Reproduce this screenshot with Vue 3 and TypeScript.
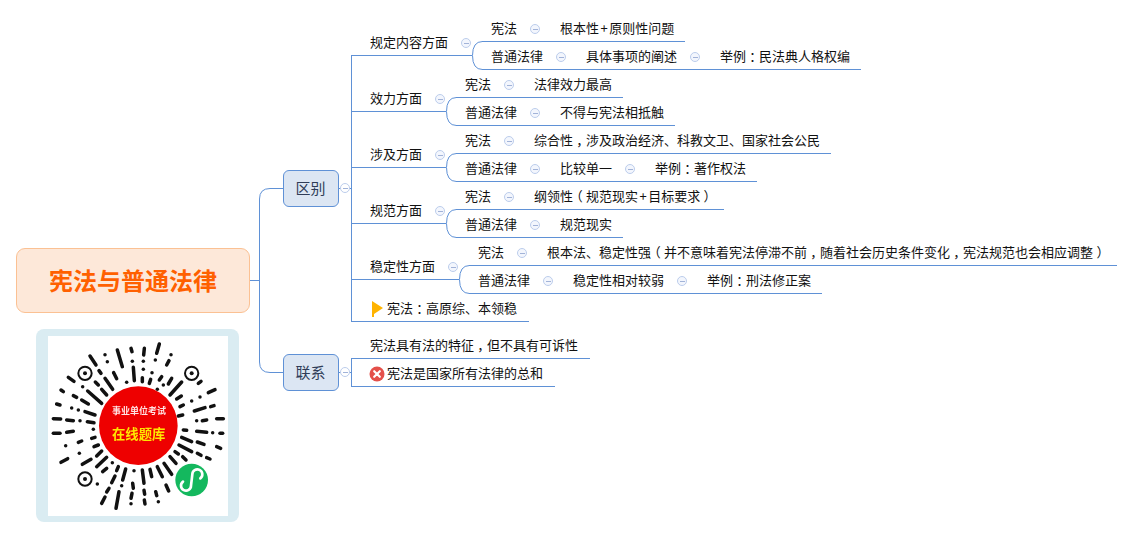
<script setup lang="ts">
type Aspect = { label: string; line: number; fork: number; rows: string[][] }

const aspects: Aspect[] = [
  { label: '规定内容方面', line: 55, fork: 472, rows: [['宪法', '根本性+原则性问题'], ['普通法律', '具体事项的阐述', '举例：民法典人格权编']] },
  { label: '效力方面', line: 111, fork: 446, rows: [['宪法', '法律效力最高'], ['普通法律', '不得与宪法相抵触']] },
  { label: '涉及方面', line: 167, fork: 446, rows: [['宪法', '综合性，涉及政治经济、科教文卫、国家社会公民'], ['普通法律', '比较单一', '举例：著作权法']] },
  { label: '规范方面', line: 223, fork: 446, rows: [['宪法', '纲领性（规范现实+目标要求）'], ['普通法律', '规范现实']] },
  { label: '稳定性方面', line: 279, fork: 459, rows: [['宪法', '根本法、稳定性强（并不意味着宪法停滞不前，随着社会历史条件变化，宪法规范也会相应调整）'], ['普通法律', '稳定性相对较弱', '举例：刑法修正案']] }
]

// The reference font centres full-width punctuation in its cell, so those glyphs get their own box.
const segs = (t: string) => t.split(/([，：（）+])/).filter(Boolean)
const punct = (s: string) => (s === '+' ? 'pc plus' : /[，：（）]/.test(s) ? 'pc half' : '')

const forkPath = (a: Aspect) => {
  const f = a.fork + 0.5
  const y = a.line + 0.5
  return `M${f + 10} ${y - 14} Q${f} ${y - 14} ${f} ${y} Q${f} ${y + 14} ${f + 10} ${y + 14}`
}

const rays: number[][] = [
  [478,72,470,100],[433,85,431,105],[393,85,396,95],[352,90,367,140],[315,104,315,104],[513,104,513,104],
  [270,108,288,135],[322,125,322,125],[397,124,397,124],[430,124,430,124],[466,120,466,120],[507,122,500,135],
  [297,152,303,160],[341,158,350,176],[400,142,403,182],[430,148,430,148],[456,158,456,158],[485,170,478,180],
  [515,175,505,192],[315,175,338,208],[286,186,295,195],[380,187,380,187],[427,173,427,185],[452,178,448,190],
  [490,195,490,195],[545,186,510,225],[603,184,595,190],[205,172,222,184],[248,200,248,200],[305,208,320,225],
  [263,213,305,250],[472,208,472,208],[645,209,625,218],[183,210,190,215],[220,227,230,232],[245,240,265,252],
  [530,237,544,228],[600,231,600,231],[575,243,575,243],[170,252,180,255],[215,264,215,264],[235,270,235,270],
  [255,275,285,285],[540,260,550,255],[583,273,615,263],[632,260,642,257],[160,296,182,297],[200,300,220,302],
  [240,302,240,302],[262,305,282,308],[535,288,548,285],[590,302,590,302],[607,302,620,300],[650,296,670,296],
  [160,340,180,340],[200,337,220,334],[280,328,280,328],[550,330,560,331],[590,334,620,337],[638,338,638,338],
  [660,340,668,340],[235,367,245,363],[275,355,285,352],[545,352,575,365],[592,366,612,373],[650,380,662,385],
  [197,377,197,377],[282,380,295,375],[537,375,575,395],[238,400,238,400],[290,408,305,393],[525,395,535,402],
  [592,400,603,406],[620,413,630,417],[183,427,203,416],[247,433,273,418],[290,440,320,412],[510,410,528,430],
  [548,410,558,420],[337,428,337,428],[308,455,320,445],[355,440,350,452],[377,447,368,480],[402,452,402,452],
  [427,450,432,490],[450,448,455,470],[472,440,487,470],[492,430,515,463],[345,468,335,488],[292,492,292,492],
  [327,505,320,516],[365,497,365,497],[398,490,400,505],[432,511,434,523],[467,515,470,527],[498,495,506,513],
  [315,531,305,550],[357,515,348,565],[396,520,393,535],[393,551,393,551],[433,540,435,552],[475,545,475,545]
]
const finders: number[][] = [[255,160],[575,160],[255,477]]
const notes = { flag: '宪法：高原综、本领稳', plain: '宪法具有法的特征，但不具有可诉性', cross: '宪法是国家所有法律的总和' }
</script>

<template>
  <div class="map">
    <svg class="links" width="1134" height="538" viewBox="0 0 1134 538">
      <path d="M250 280.5H259.5M283 188.5H270Q259.5 188.5 259.5 199V362Q259.5 372.5 270 372.5H283" />
      <path d="M339 188.5H351.5M351.5 55V322" />
      <path d="M339 372.5H351.5M351.5 358V387" />
      <path v-for="a in aspects" :key="a.label" :d="forkPath(a)" />
    </svg>

    <div class="root">宪法与普通法律</div>

    <div class="qr">
      <svg class="qr-art" width="203" height="193" viewBox="108 27 609 579">
        <rect x="144" y="48" width="540" height="540" fill="#fff" />
        <g stroke="#111" stroke-width="10.5" stroke-linecap="round" fill="none">
          <path v-for="(r, i) in rays" :key="i" :d="`M${r[0]} ${r[1]}L${r[2]} ${r[3]}`" />
        </g>
        <g v-for="(f, i) in finders" :key="'f' + i">
          <circle :cx="f[0]" :cy="f[1]" r="20" fill="none" stroke="#111" stroke-width="6" />
          <circle :cx="f[0]" :cy="f[1]" r="6" fill="#111" />
        </g>
        <circle cx="415" cy="317" r="118" fill="#ee0000" />
        <text x="417" y="283" class="qr-top">事业单位考试</text>
        <text x="416" y="356" class="qr-main">在线题库</text>
        <circle cx="575" cy="480" r="49" fill="#14b85e" />
        <path d="M549 485A15 15 0 1 0 573 497L577 463A15 15 0 1 1 601 475" fill="none" stroke="#fff" stroke-width="8" stroke-linecap="round" />
      </svg>
    </div>

    <div class="topic" style="left:283px;top:170px">区别</div>
    <span class="toggle abs" style="left:340px;top:183px"></span>
    <div class="topic" style="left:283px;top:354px">联系</div>
    <span class="toggle abs" style="left:340px;top:367px"></span>

    <template v-for="a in aspects" :key="a.label">
      <div class="row aspect" :style="{ top: a.line - 24 + 'px', width: a.fork - 352 + 'px' }">
        <span>{{ a.label }}</span><i class="toggle"></i>
      </div>
      <div
        v-for="(r, i) in a.rows"
        :key="i"
        class="row leaf"
        :style="{ left: a.fork + 10 + 'px', top: a.line + (i ? 14 : -14) - 24 + 'px' }"
      >
        <template v-for="(p, j) in r" :key="j">
          <i v-if="j" class="toggle"></i><span><span v-for="(s, k) in segs(p)" :key="k" :class="punct(s)">{{ s }}</span></span>
        </template>
      </div>
    </template>

    <div class="row note" style="top:297px">
      <svg class="flag" width="11" height="16" viewBox="0 0 11 16"><path d="M0 0L11 7L2 13V16H0Z" fill="#ffb300" /></svg>
      <span><span v-for="(s, k) in segs(notes.flag)" :key="k" :class="punct(s)">{{ s }}</span></span>
    </div>
    <div class="row note plain" style="top:334px">
      <span><span v-for="(s, k) in segs(notes.plain)" :key="k" :class="punct(s)">{{ s }}</span></span>
    </div>
    <div class="row note" style="top:362px">
      <svg class="cross" width="16" height="16" viewBox="0 0 16 16">
        <circle cx="8" cy="8" r="7.5" fill="#e4504a" />
        <path d="M5.2 5.2L10.8 10.8M10.8 5.2L5.2 10.8" stroke="#fff" stroke-width="2.2" stroke-linecap="round" />
      </svg>
      <span>{{ notes.cross }}</span>
    </div>
  </div>
</template>

<style>
html, body { margin: 0; background: #fff; }
</style>

<style scoped>
.map {
  position: relative;
  width: 1134px;
  height: 538px;
  overflow: hidden;
  background: #fff;
  font-family: "Noto Sans CJK SC", "Noto Sans", sans-serif;
  font-size: 13px;
  color: #111;
}
.links { position: absolute; left: 0; top: 0; }
.links path { fill: none; stroke: #5f91d6; stroke-width: 1; }
.root {
  position: absolute;
  left: 16px;
  top: 248px;
  width: 234px;
  height: 65px;
  box-sizing: border-box;
  padding-bottom: 2px;
  display: flex;
  align-items: center;
  justify-content: center;
  background: #fde8d9;
  border: 1px solid #fbc193;
  border-radius: 9px;
  color: #ff6000;
  font-size: 24px;
  font-weight: 700;
}
.qr {
  position: absolute;
  left: 36px;
  top: 329px;
  width: 203px;
  height: 193px;
  background: #daecf2;
  border-radius: 8px;
}
.qr-art { display: block; filter: blur(0.35px); }
.qr-top { font-size: 27px; font-weight: 700; fill: #ffe2e2; text-anchor: middle; }
.qr-main { font-size: 40px; font-weight: 700; fill: #ffe600; text-anchor: middle; }
.topic {
  position: absolute;
  width: 56px;
  height: 37px;
  box-sizing: border-box;
  padding: 0 1px 2px 0;
  display: flex;
  align-items: center;
  justify-content: center;
  background: #dce6f3;
  border: 1px solid #5f91d6;
  border-radius: 6px;
  color: #2f3d58;
  font-size: 15px;
}
.toggle {
  display: block;
  position: relative;
  flex: none;
  width: 10px;
  height: 10px;
  box-sizing: border-box;
  margin: 2px 20px 0 13px;
  border: 1px solid #bccdec;
  border-radius: 50%;
  background: #f3f6fd;
}
.toggle::after {
  content: "";
  position: absolute;
  left: 1.5px;
  right: 1.5px;
  top: 3.5px;
  height: 1px;
  background: #a2b3d8;
}
.toggle.abs { position: absolute; margin: 0; background: #fff; }
.row {
  position: absolute;
  display: flex;
  align-items: center;
  box-sizing: border-box;
  height: 25px;
  line-height: 22px;
  white-space: nowrap;
  border-bottom: 1px solid #5f91d6;
  padding-bottom: 2px;
}
.aspect { left: 352px; padding-left: 18px; }
.aspect .toggle { margin-right: 0; }
.leaf { padding-left: 9px; padding-right: 11px; }
.note { left: 352px; padding-left: 17px; padding-right: 12px; }
.plain { padding-left: 18px; }
.flag { margin: 1px 4px 0 3px; }
.cross { margin: 2px 2px 0 0; }
.pc { display: inline-block; }
.half { font-feature-settings: "halt"; padding: 0 3.25px; }
.plus { padding: 0 1.5px; }
</style>
